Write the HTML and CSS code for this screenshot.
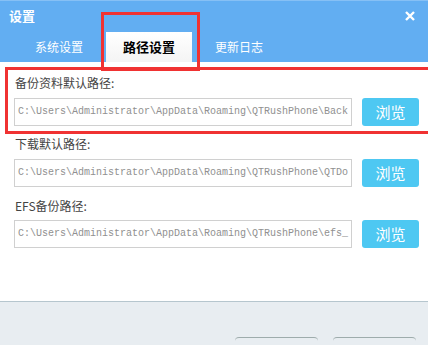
FILE: index.html
```html
<!DOCTYPE html>
<html>
<head>
<meta charset="utf-8">
<title>设置</title>
<link rel="stylesheet" href="styles.css">
</head>
<body>
<div class="window">
	<div class="header">
		<div class="titlebar">
			<span class="title">设置</span>
			<svg class="close" width="10" height="10" viewBox="0 0 10 10"><path d="M1 1L9 9M9 1L1 9" stroke="#fff" stroke-width="2.4"/></svg>
		</div>
		<div class="tabs">
			<div class="tab">系统设置</div>
			<div class="tab active">路径设置</div>
			<div class="tab">更新日志</div>
		</div>
	</div>
	<div class="content">
		<div class="row">
			<div class="label">备份资料默认路径:</div>
			<div class="field">
				<div class="path">C:\Users\Administrator\AppData\Roaming\QTRushPhone\Back</div>
				<a class="browse">浏览</a>
			</div>
		</div>
		<div class="row">
			<div class="label">下载默认路径:</div>
			<div class="field">
				<div class="path">C:\Users\Administrator\AppData\Roaming\QTRushPhone\QTDo</div>
				<a class="browse">浏览</a>
			</div>
		</div>
		<div class="row">
			<div class="label low">EFS备份路径:</div>
			<div class="field">
				<div class="path">C:\Users\Administrator\AppData\Roaming\QTRushPhone\efs_</div>
				<a class="browse">浏览</a>
			</div>
		</div>
	</div>
	<div class="footer">
		<a class="btn"></a>
		<a class="btn"></a>
	</div>
	<!-- annotation boxes -->
	<div class="mark mark-tab"></div>
	<div class="mark mark-row"></div>
</div>
</body>
</html>
```

FILE: styles.css
```css
body{
	margin:0;
	font-family:"Noto Sans CJK SC","Liberation Sans",sans-serif;
}
.window{
	position:relative;
	width:428px;
	height:345px;
	overflow:hidden;
	display:flex;
	flex-direction:column;
	background:#fff;
}
.header{
	height:61px;
	background:#62aef2;
	border-top:1px solid #86c0f5;
}
.titlebar{
	height:31px;
	display:flex;
	align-items:center;
	justify-content:space-between;
	padding:0 13px 0 9px;
}
.title{
	color:#fff;
	font-size:13px;
	font-weight:bold;
	line-height:14px;
	margin-top:-2px;
}
.close{
	display:block;
	margin-top:-1px;
}
.tabs{
	display:flex;
	gap:4px;
	padding-left:16px;
}
.tab{
	width:86px;
	height:30px;
	line-height:30px;
	text-align:center;
	font-size:12px;
	color:#fff;
}
.tab.active{
	background:#fff;
	background:linear-gradient(#fff,#f4f4f4);
	color:#000;
	font-size:13px;
	font-weight:bold;
}
.content{
	flex:1;
	padding:11px 0 0 14px;
	display:flex;
	flex-direction:column;
	gap:8px;
}
.label{
	font-size:12px;
	line-height:20px;
	color:#444;
	padding-left:1px;
	margin-bottom:5px;
}
.label.low{
	line-height:22px;
	margin-bottom:3px;
	padding-top:2px;
	margin-top:-2px;
}
.field{
	display:flex;
	gap:10px;
}
.path{
	width:331px;
	height:26px;
	line-height:26px;
	padding:0 2px 0 3px;
	border:1px solid #d0d0d0;
	font-family:"Liberation Mono",monospace;
	font-size:10px;
	color:#909090;
	white-space:nowrap;
	overflow:hidden;
}
.browse{
	width:57px;
	height:28px;
	line-height:28px;
	border-radius:3px;
	background:#4ec8f2;
	color:#fff;
	font-size:15px;
	text-align:center;
}
.footer{
	height:44px;
	box-sizing:border-box;
	background:#e8edf1;
	border-top:1px solid #b6c6ce;
	display:flex;
	justify-content:flex-end;
	gap:15px;
	padding:35px 12px 0 0;
}
.btn{
	width:83px;
	height:22px;
	border-top:1px solid #9eacac;
	border-radius:4px 4px 0 0;
	background:#e8edf1;
}
.mark{
	position:absolute;
	border:3px solid #f03232;
	box-sizing:border-box;
}
.mark-tab{
	left:101px;
	top:12px;
	width:99px;
	height:59px;
}
.mark-row{
	left:5px;
	top:67px;
	width:430px;
	height:67px;
}
```
